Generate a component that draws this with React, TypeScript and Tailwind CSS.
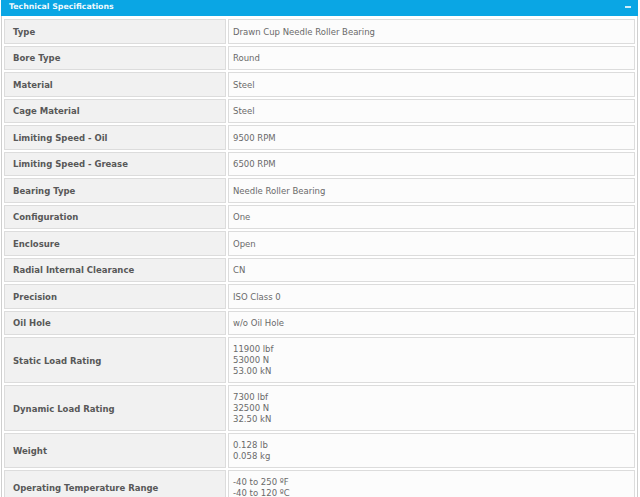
const specs: [string, string[]][] = [
  ['Type', ['Drawn Cup Needle Roller Bearing']],
  ['Bore Type', ['Round']],
  ['Material', ['Steel']],
  ['Cage Material', ['Steel']],
  ['Limiting Speed - Oil', ['9500 RPM']],
  ['Limiting Speed - Grease', ['6500 RPM']],
  ['Bearing Type', ['Needle Roller Bearing']],
  ['Configuration', ['One']],
  ['Enclosure', ['Open']],
  ['Radial Internal Clearance', ['CN']],
  ['Precision', ['ISO Class 0']],
  ['Oil Hole', ['w/o Oil Hole']],
  ['Static Load Rating', ['11900 lbf', '53000 N', '53.00 kN']],
  ['Dynamic Load Rating', ['7300 lbf', '32500 N', '32.50 kN']],
  ['Weight', ['0.128 lb', '0.058 kg']],
  ['Operating Temperature Range', ['-40 to 250 ºF', '-40 to 120 ºC']],
];

export default function App() {
  return (
    <div className="h-[497px] overflow-hidden bg-white font-['DejaVu_Sans',Verdana,sans-serif]">
      <div className="ml-[1px] w-[637px]">
        {/* Header */}
        <div className="flex h-[16px] items-center justify-between bg-[#0aa6e4] pb-[2px] pl-[8px] pr-[7px] text-[7.8px] font-bold text-white/95">
          <span>Technical Specifications</span>
          <span className="block h-[1.5px] w-[6px] bg-white/80" />
        </div>
        {/* Body */}
        <div className="border-x border-[#cfcfcf] px-[2px] pt-[3px]">
          <div className="flex flex-col gap-[2px] bg-white">
            {specs.map(([label, values]) => (
              <div key={label} className="flex gap-[2px]">
                <div className="flex w-[222px] shrink-0 items-center border border-[#dcdcdc] bg-[#f1f1f1] pl-[8px] pt-[2px] text-[8.5px] font-bold leading-[11px] text-[#585858]">
                  {label}
                </div>
                <div
                  className={
                    values.length > 1
                      ? 'flex-1 border border-[#dcdcdc] bg-[#fcfcfc] px-[4px] py-[5.5px] text-[8.5px] leading-[11px] text-[#6a6a6a]'
                      : 'flex-1 border border-[#dcdcdc] bg-[#fcfcfc] px-[4px] pb-[4.75px] pt-[6.75px] text-[8.5px] leading-[11px] text-[#6a6a6a]'
                  }
                >
                  {values.map((v) => (
                    <div key={v}>{v}</div>
                  ))}
                </div>
              </div>
            ))}
          </div>
        </div>
      </div>
    </div>
  );
}
